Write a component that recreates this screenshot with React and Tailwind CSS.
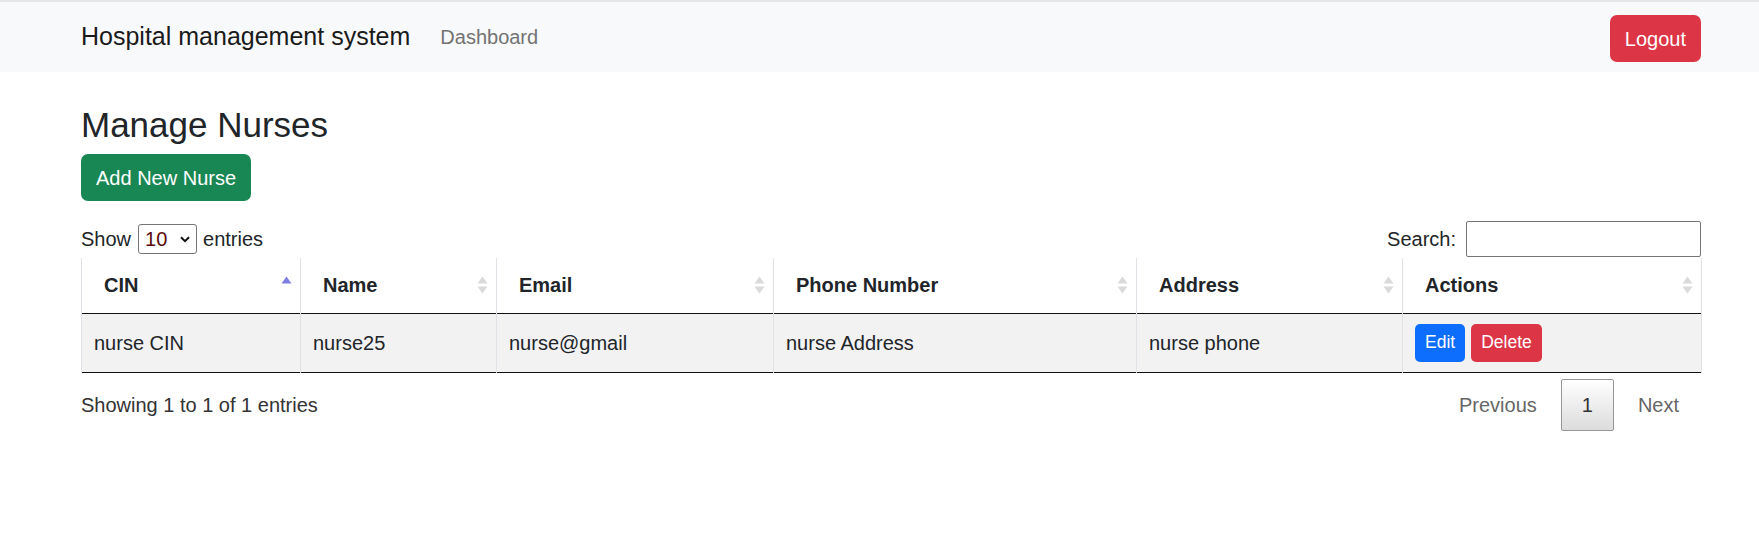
import React from "react";

const nurses = [
  { cin: "nurse CIN", name: "nurse25", email: "nurse@gmail", phone: "nurse Address", address: "nurse phone" },
];

const columns = [
  { label: "CIN", width: "w-[219px]", sort: "asc" },
  { label: "Name", width: "w-[196px]", sort: "both" },
  { label: "Email", width: "w-[277px]", sort: "both" },
  { label: "Phone Number", width: "w-[363px]", sort: "both" },
  { label: "Address", width: "w-[266px]", sort: "both" },
  { label: "Actions", width: "w-[299px]", sort: "both" },
];

// datatables style sort arrows
function SortIcon({ dir }) {
  return (
    <svg width="11" height="19" viewBox="0 0 11 19" className="absolute right-[8px] top-1/2 -translate-y-1/2">
      {dir === "asc" ? (
        <polygon points="5.5,1 10.5,8 0.5,8" fill="#7f7fe3" />
      ) : (
        <>
          <polygon points="5.5,1 10.5,8 0.5,8" fill="#dadada" />
          <polygon points="0.5,11 10.5,11 5.5,18" fill="#dadada" />
        </>
      )}
    </svg>
  );
}

export default function App() {
  return (
    <div className="min-h-screen bg-white text-[#212529] font-['Liberation_Sans',Arial,sans-serif] text-[20px]">
      {/* Navbar */}
      <nav className="border-t-2 border-[#e6e6e6] bg-[#f8f9fa] h-[72px]">
        <div className="ml-[81px] w-[1620px] h-full flex items-center">
          <span className="text-[25px] text-[#1a1a1a] mr-[20px]">Hospital management system</span>
          <span className="text-[#737373] px-[10px]">Dashboard</span>
          <button className="ml-auto h-[47px] px-[15px] rounded-[7px] bg-[#dc3545] text-white mt-[3px]">Logout</button>
        </div>
      </nav>

      <main className="ml-[81px] w-[1620px]">
        <h2 className="text-[35px] leading-[1.2] font-medium mt-[32px]">Manage Nurses</h2>
        <button className="mt-[8px] h-[47px] px-[15px] rounded-[7px] bg-[#198754] text-white">Add New Nurse</button>

        {/* length + search */}
        <div className="mt-[20px] h-[36px] flex justify-between items-center">
          <div className="flex items-center">
            <span>Show</span>
            <div className="ml-[7px] w-[59px] h-[30px] border border-[#767676] rounded-[3px] flex items-center justify-between pl-[6px] pr-[6px]">
              <span className="text-[#5a0a0a]">10</span>
              <svg width="10" height="7" viewBox="0 0 10 7">
                <path d="M1 1.2 L5 5.2 L9 1.2" stroke="#111" strokeWidth="2" fill="none" />
              </svg>
            </div>
            <span className="ml-[6px]">entries</span>
          </div>
          <div className="flex items-center">
            <span>Search:</span>
            <div className="ml-[10px] w-[235px] h-[36px] border border-[#767676] rounded-[2px]" />
          </div>
        </div>

        {/* table */}
        <table className="mt-px w-[1620px] table-fixed border-collapse">
          <thead>
            <tr className="h-[55px] border-b border-[#111]">
              {columns.map((c, i) => (
                <th
                  key={c.label}
                  className={`${c.width} relative text-left font-bold pl-[22px] pr-[22px] border-l border-[#dee2e6] ${i === columns.length - 1 ? "border-r" : ""}`}
                >
                  {c.label}
                  <SortIcon dir={c.sort} />
                </th>
              ))}
            </tr>
          </thead>
          <tbody>
            {nurses.map((n) => (
              <tr key={n.cin} className="h-[59px] bg-[#f2f2f2] border-b border-[#111]">
                <td className="px-[12px] border-l border-[#dee2e6]">{n.cin}</td>
                <td className="px-[12px] border-l border-[#dee2e6]">{n.name}</td>
                <td className="px-[12px] border-l border-[#dee2e6]">{n.email}</td>
                <td className="px-[12px] border-l border-[#dee2e6]">{n.phone}</td>
                <td className="px-[12px] border-l border-[#dee2e6]">{n.address}</td>
                <td className="px-[12px] border-l border-r border-[#dee2e6]">
                  <div className="flex gap-[6px]">
                    <button className="h-[38px] px-[10px] rounded-[5px] bg-[#0d6efd] text-white text-[17.5px]">Edit</button>
                    <button className="h-[38px] px-[10px] rounded-[5px] bg-[#dc3545] text-white text-[17.5px]">Delete</button>
                  </div>
                </td>
              </tr>
            ))}
          </tbody>
        </table>

        {/* info + pagination */}
        <div className="flex justify-between">
          <div className="pt-[17px] leading-[30px] text-[#333]">Showing 1 to 1 of 1 entries</div>
          <div className="pt-[6px] flex">
            <span className="px-[21px] py-[10px] leading-[30px] border border-transparent text-[#666]">Previous</span>
            <span className="ml-[2px] px-[20px] py-[10px] leading-[30px] border border-[#979797] rounded-[2px] text-[#333] bg-gradient-to-b from-white to-[#dcdcdc]">1</span>
            <span className="ml-[2px] px-[21px] py-[10px] leading-[30px] border border-transparent text-[#666]">Next</span>
          </div>
        </div>
      </main>
    </div>
  );
}
